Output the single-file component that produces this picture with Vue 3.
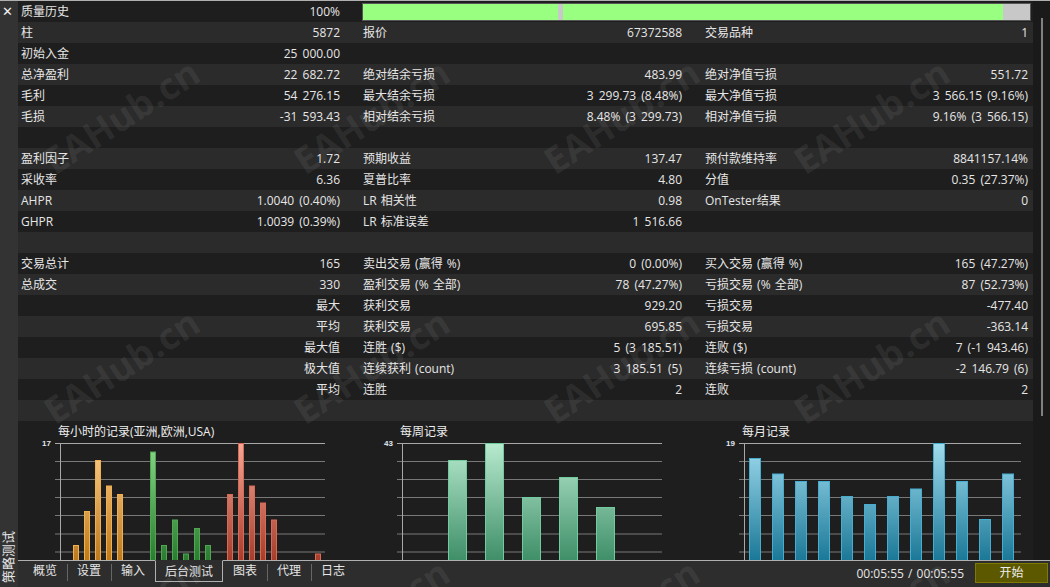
<script setup>
const rows = [
  ['质量历史', '100%', 'BAR'],
  ['柱', '5872', '报价', '67372588', '交易品种', '1'],
  ['初始入金', '25 000.00', '', '', '', ''],
  ['总净盈利', '22 682.72', '绝对结余亏损', '483.99', '绝对净值亏损', '551.72'],
  ['毛利', '54 276.15', '最大结余亏损', '3 299.73 (8.48%)', '最大净值亏损', '3 566.15 (9.16%)'],
  ['毛损', '-31 593.43', '相对结余亏损', '8.48% (3 299.73)', '相对净值亏损', '9.16% (3 566.15)'],
  ['', '', '', '', '', ''],
  ['盈利因子', '1.72', '预期收益', '137.47', '预付款维持率', '8841157.14%'],
  ['采收率', '6.36', '夏普比率', '4.80', '分值', '0.35 (27.37%)'],
  ['AHPR', '1.0040 (0.40%)', 'LR 相关性', '0.98', 'OnTester结果', '0'],
  ['GHPR', '1.0039 (0.39%)', 'LR 标准误差', '1 516.66', '', ''],
  ['', '', '', '', '', ''],
  ['交易总计', '165', '卖出交易 (赢得 %)', '0 (0.00%)', '买入交易 (赢得 %)', '165 (47.27%)'],
  ['总成交', '330', '盈利交易 (% 全部)', '78 (47.27%)', '亏损交易 (% 全部)', '87 (52.73%)'],
  ['', '最大', '获利交易', '929.20', '亏损交易', '-477.40'],
  ['', '平均', '获利交易', '695.85', '亏损交易', '-363.14'],
  ['', '最大值', '连胜 ($)', '5 (3 185.51)', '连败 ($)', '7 (-1 943.46)'],
  ['', '极大值', '连续获利 (count)', '3 185.51 (5)', '连续亏损 (count)', '-2 146.79 (6)'],
  ['', '平均', '连胜', '2', '连败', '2'],
  ['', '', '', '', '', ''],
]

const gridY = [6.5, 24.5, 42.5, 60.5, 78.5, 97, 115]
const TOP = 437

function makeBars(tops, xOf, w) {
  return tops.map(([k, yAbs]) => ({ x: xOf(k), y: yAbs - TOP, w }))
}

const charts = [
  {
    title: '每小时的记录(亚洲,欧洲,USA)',
    label: '17',
    gridEnd: 307,
    groups: [
      { id: 'go', top: '#ffd08a', bottom: '#bd7a1c', stroke: '#f0b050',
        bars: makeBars([[0, 545.5], [1, 511.5], [2, 460.5], [3, 486], [4, 494.5]], k => 55.5 + 11 * k, 5) },
      { id: 'gg', top: '#8ad88a', bottom: '#2a7c30', stroke: '#4fa850',
        bars: makeBars([[7, 452], [8, 545.5], [9, 520], [10, 554], [11, 528.5], [12, 545.5]], k => 55.5 + 11 * k, 5) },
      { id: 'gr', top: '#f4a898', bottom: '#a83c2a', stroke: '#d86a56',
        bars: makeBars([[14, 494.5], [15, 443.5], [16, 486], [17, 503], [18, 520], [22, 554]], k => 55.5 + 11 * k, 5) },
    ],
  },
  {
    title: '每周记录',
    label: '43',
    gridEnd: 302,
    groups: [
      { id: 'gw', top: '#b8eacf', bottom: '#3f8f69', stroke: '#70cc9c',
        bars: makeBars([[0, 460.5], [1, 443.5], [2, 497.5], [3, 477.5], [4, 507.5]], k => 88.5 + 37 * k, 18) },
    ],
  },
  {
    title: '每月记录',
    label: '19',
    gridEnd: 319,
    groups: [
      { id: 'gm', top: '#a0dcee', bottom: '#1b7897', stroke: '#46acd0',
        bars: makeBars([[0, 458.5], [1, 474], [2, 481.5], [3, 481.5], [4, 496.5], [5, 504.5], [6, 496.5], [7, 489], [8, 443.5], [9, 481.5], [10, 519.5], [11, 474]], k => 47.5 + 23 * k, 11) },
    ],
  },
]

const tabs = ['概览', '设置', '输入', '后台测试', '图表', '代理', '日志']
const activeTab = '后台测试'
const marks = Array.from({ length: 12 }, (_, i) => i)
</script>

<template>
  <div class="app">
    <aside class="side">
      <span class="close">✕</span>
      <span class="side-title">策略测试</span>
    </aside>
    <div class="right">
      <div class="upper">
        <main class="main">
          <div v-for="(r, i) in rows" :key="i" class="row" :class="{ odd: i % 2 === 1 }">
            <template v-if="r[2] === 'BAR'">
              <div class="cell"><span>{{ r[0] }}</span><span class="val">{{ r[1] }}</span></div>
              <div class="quality">
                <div class="q-green q-a"></div>
                <div class="q-grey q-b"></div>
                <div class="q-green q-c"></div>
                <div class="q-grey q-d"></div>
              </div>
            </template>
            <template v-else>
              <div class="cell"><span>{{ r[0] }}</span><span class="val">{{ r[1] }}</span></div>
              <div class="cell"><span>{{ r[2] }}</span><span class="val">{{ r[3] }}</span></div>
              <div class="cell last"><span>{{ r[4] }}</span><span class="val">{{ r[5] }}</span></div>
            </template>
          </div>
          <section class="charts">
            <div v-for="c in charts" :key="c.title" class="chart">
              <div class="chart-title">{{ c.title }}</div>
              <svg class="plot" width="331" height="123" viewBox="0 0 331 123">
                <defs>
                  <template v-for="g in c.groups" :key="g.id">
                    <linearGradient :id="g.id" gradientUnits="userSpaceOnUse" x1="0" y1="6" x2="0" y2="123">
                      <stop offset="0" :stop-color="g.top" />
                      <stop offset="1" :stop-color="g.bottom" />
                    </linearGradient>
                  </template>
                </defs>
                <text class="ymax" x="33" y="8.5" text-anchor="end">{{ c.label }}</text>
                <line v-for="(y, n) in gridY" :key="n" x1="37" :x2="c.gridEnd" :y1="y" :y2="y"
                  :stroke="n === 0 ? '#a8a8a8' : '#787878'" stroke-width="1.2" />
                <line x1="42.5" x2="42.5" y1="6" y2="123" stroke="#a8a8a8" />
                <template v-for="g in c.groups" :key="g.id + 'b'">
                  <rect v-for="(b, n) in g.bars" :key="n" :x="b.x" :y="b.y" :width="b.w" :height="125 - b.y"
                    :fill="`url(#${g.id})`" :stroke="g.stroke" />
                </template>
              </svg>
            </div>
          </section>
        </main>
        <div class="scroll"><div class="thumb"></div></div>
      </div>
      <footer class="bar">
        <div v-for="t in tabs" :key="t" class="tab" :class="{ active: t === activeTab }">{{ t }}</div>
        <div class="time">00:05:55 / 00:05:55</div>
        <div class="start">开始</div>
      </footer>
    </div>
    <div class="marks">
      <div v-for="m in marks" :key="m" class="mark"><span>EAHub.cn</span></div>
    </div>
  </div>
</template>

<style>
html, body { margin: 0; background: #1e1e1e; }
</style>

<style scoped>
.app {
  position: relative;
  width: 1050px;
  height: 587px;
  display: flex;
  overflow: hidden;
  box-sizing: border-box;
  border-top: 1px solid #b0b0b0;
  background: #1e1e1e;
  color: #e6e6e6;
  font: 12px/21px "Open Sans", "Noto Sans CJK SC", sans-serif;
}
.side {
  width: 18px;
  flex: none;
  background: #333;
  display: flex;
  flex-direction: column;
  align-items: center;
  justify-content: space-between;
  padding-bottom: 4px;
  box-sizing: border-box;
}
.close {
  font: bold 13px/21px "DejaVu Sans", sans-serif;
  color: #f0f0f0;
  margin-right: 3px;
}
.side-title {
  writing-mode: vertical-rl;
  text-orientation: sideways;
  transform: rotate(180deg);
  font-size: 13px;
  line-height: 14px;
  margin-right: 2px;
}
.right {
  flex: 1;
  min-width: 0;
  display: flex;
  flex-direction: column;
}
.upper {
  flex: 1;
  min-height: 0;
  display: flex;
  overflow: hidden;
}
.main {
  width: 1015px;
  flex: none;
  background: #1e1e1e;
}
.row {
  height: 21px;
  display: grid;
  grid-template-columns: 342px 342px 331px;
  background: #1e1e1e;
}
.row.odd { background: #2b2b2b; }
.cell {
  display: flex;
  justify-content: space-between;
  height: 21px;
  box-sizing: border-box;
  padding: 1px 20px 0 3px;
  line-height: 20px;
  white-space: pre;
  word-spacing: 1px;
}
.val { word-spacing: 2px; }
.cell.last { padding-right: 5px; }
.quality {
  grid-column: span 2;
  width: 669px;
  height: 18px;
  margin: 2px 0 0 2px;
  box-sizing: border-box;
  border: 1px solid #565656;
  display: flex;
}
.q-green { background: #99ff80; }
.q-grey { background: #c8c8c8; }
.q-a { width: 195px; }
.q-b { width: 5px; }
.q-c { width: 440px; }
.q-d { flex: 1; }
.charts {
  display: grid;
  grid-template-columns: 342px 342px 331px;
  height: 139px;
  overflow: hidden;
  background: #1e1e1e;
}
.chart { height: 139px; overflow: hidden; }
.chart-title {
  height: 16px;
  padding-left: 40px;
  line-height: 21px;
  color: #eee;
  white-space: pre;
}
.plot { display: block; }
.ymax {
  font: bold 8px "Liberation Sans", sans-serif;
  fill: #e0e8f0;
}
.scroll {
  flex: 1;
  background: #1a1a1a;
  padding: 17px 0 0 8px;
  box-sizing: border-box;
}
.thumb {
  width: 2px;
  height: 398px;
  background: #808080;
}
.bar {
  height: 27px;
  flex: none;
  box-sizing: border-box;
  border-top: 1px solid #b0b0b0;
  background: #2d2d2d;
  display: flex;
  align-items: flex-start;
}
.tab {
  position: relative;
  height: 21px;
  line-height: 20px;
  padding: 0 10px;
  color: #e6e6e6;
}
.tab:first-child { margin-left: 5px; }
.tab:not(:first-child):not(.active):not(.active + .tab)::before {
  content: "";
  position: absolute;
  left: 0;
  top: 3px;
  height: 17px;
  width: 1px;
  background: #666;
}
.tab.active {
  margin-top: -1px;
  height: 22px;
  line-height: 22px;
  box-sizing: border-box;
  border: 1px solid #b0b0b0;
  border-top-color: #2d2d2d;
  padding: 0 9px;
  background: #2d2d2d;
}
.time {
  margin-left: auto;
  margin-right: 11px;
  line-height: 25px;
  white-space: pre;
  word-spacing: 1px;
}
.start {
  width: 73px;
  height: 20px;
  margin: 2px 2px 0 0;
  box-sizing: border-box;
  border: 1px solid #7f7a00;
  background: #5c5800;
  text-align: center;
  line-height: 18px;
  color: #eee;
}
.marks {
  position: absolute;
  left: -4px;
  top: -11px;
  display: grid;
  grid-template-columns: repeat(4, 250px);
  grid-auto-rows: 250px;
  pointer-events: none;
}
.mark {
  display: flex;
  align-items: center;
  justify-content: center;
}
.mark span {
  transform: rotate(-33deg);
  font: bold 37px "Open Sans", sans-serif;
  color: rgba(255, 255, 255, 0.07);
  white-space: nowrap;
}
</style>
